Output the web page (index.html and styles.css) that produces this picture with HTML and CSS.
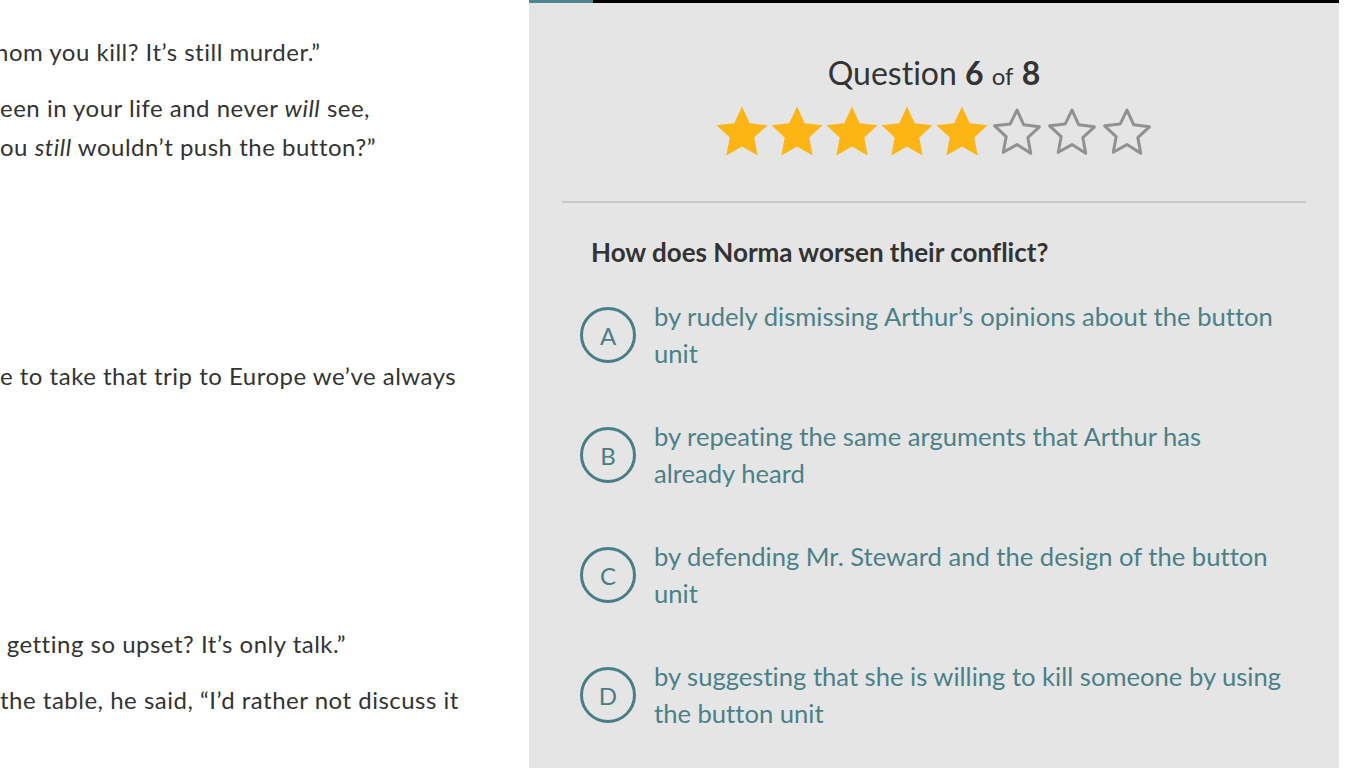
FILE: index.html
```html
<!DOCTYPE html>
<html lang="en">
<head>
<meta charset="utf-8">
<title>Question 6 of 8</title>
<link rel="stylesheet" href="styles.css">
</head>
<body>
<div class="page">
  <section class="reading">
    <div class="text">
      <p><span class="line cut-h">hom you kill? It’s still murder.”</span></p>
      <p>
        <span class="line">een in your life and never <em>will</em> see,</span>
        <span class="line">ou <em>still</em> wouldn’t push the button?”</span>
      </p>
      <p>
        <span class="line">&nbsp;</span>
        <span class="line">&nbsp;</span>
      </p>
      <p>
        <span class="line">&nbsp;</span>
        <span class="line">&nbsp;</span>
        <span class="line">e to take that trip to Europe we’ve always</span>
      </p>
      <p>
        <span class="line">&nbsp;</span>
        <span class="line">&nbsp;</span>
        <span class="line">&nbsp;</span>
      </p>
      <p>
        <span class="line">&nbsp;</span>
        <span class="line">&nbsp;</span>
        <span class="line">&nbsp;getting so upset? It’s only talk.”</span>
      </p>
      <p>
        <span class="line">the table, he said, “I’d rather not discuss it</span>
      </p>
    </div>
  </section>
  <section class="quiz">
    <div class="progress"><div class="progress-fill"></div></div>
    <div class="quiz-body">
      <h2 class="counter">Question <b>6</b> <small>of</small> <b>8</b></h2>
      <div class="stars">
        <svg class="star full" viewBox="1.2 1.4 21.6 20.7"><path d="M12 1.6l3.2 6.9 7.4.9-5.5 5.1 1.4 7.4L12 18.2l-6.5 3.7 1.4-7.4-5.5-5.1 7.4-.9z"/></svg>
        <svg class="star full" viewBox="1.2 1.4 21.6 20.7"><path d="M12 1.6l3.2 6.9 7.4.9-5.5 5.1 1.4 7.4L12 18.2l-6.5 3.7 1.4-7.4-5.5-5.1 7.4-.9z"/></svg>
        <svg class="star full" viewBox="1.2 1.4 21.6 20.7"><path d="M12 1.6l3.2 6.9 7.4.9-5.5 5.1 1.4 7.4L12 18.2l-6.5 3.7 1.4-7.4-5.5-5.1 7.4-.9z"/></svg>
        <svg class="star full" viewBox="1.2 1.4 21.6 20.7"><path d="M12 1.6l3.2 6.9 7.4.9-5.5 5.1 1.4 7.4L12 18.2l-6.5 3.7 1.4-7.4-5.5-5.1 7.4-.9z"/></svg>
        <svg class="star full" viewBox="1.2 1.4 21.6 20.7"><path d="M12 1.6l3.2 6.9 7.4.9-5.5 5.1 1.4 7.4L12 18.2l-6.5 3.7 1.4-7.4-5.5-5.1 7.4-.9z"/></svg>
        <svg class="star empty" viewBox="1.2 1.4 21.6 20.7"><path d="M12 3.1l2.8 6.1 6.5.8-4.8 4.5 1.2 6.5L12 17.4l-5.7 3.2 1.2-6.5-4.8-4.5 6.5-.8z"/></svg>
        <svg class="star empty" viewBox="1.2 1.4 21.6 20.7"><path d="M12 3.1l2.8 6.1 6.5.8-4.8 4.5 1.2 6.5L12 17.4l-5.7 3.2 1.2-6.5-4.8-4.5 6.5-.8z"/></svg>
        <svg class="star empty" viewBox="1.2 1.4 21.6 20.7"><path d="M12 3.1l2.8 6.1 6.5.8-4.8 4.5 1.2 6.5L12 17.4l-5.7 3.2 1.2-6.5-4.8-4.5 6.5-.8z"/></svg>
      </div>
      <hr class="divider">
      <h3 class="question">How does Norma worsen their conflict?</h3>
      <ul class="options">
        <li class="option"><span class="letter">A</span><span class="answer">by rudely dismissing Arthur’s opinions about the button unit</span></li>
        <li class="option"><span class="letter">B</span><span class="answer">by repeating the same arguments that Arthur has already heard</span></li>
        <li class="option"><span class="letter">C</span><span class="answer">by defending Mr. Steward and the design of the button unit</span></li>
        <li class="option"><span class="letter">D</span><span class="answer">by suggesting that she is willing to kill someone by using the button unit</span></li>
      </ul>
    </div>
  </section>
  <div class="gutter"></div>
</div>
</body>
</html>
```

FILE: styles.css
```css
* { box-sizing: border-box; }
html, body {
  margin: 0;
  padding: 0;
  height: 100%;
  background: #ffffff;
  font-family: Lato, "Open Sans", sans-serif;
  font-variant-ligatures: none;
  overflow: hidden;
}
.page {
  display: flex;
  height: 768px;
}
.reading {
  width: 529px;
  flex: none;
  overflow: hidden;
  background: #ffffff;
}
.text {
  padding-top: 32px;
  color: #333333;
  font-size: 24px;
  letter-spacing: 0.5px;
  line-height: 39px;
}
.text p {
  margin: 0 0 17px;
}
.line {
  display: block;
  white-space: nowrap;
}
.cut-h { margin-left: -5px; }
.text em { font-style: italic; }

.quiz {
  width: 810px;
  flex: none;
  background: #e5e5e5;
  display: flex;
  flex-direction: column;
}
.gutter { flex: 1; background: #ffffff; }
.progress {
  height: 3px;
  background: #000000;
}
.progress-fill {
  width: 64px;
  height: 3px;
  background: #4e8591;
}
.quiz-body {
  padding: 50px 33px 0;
}
.counter {
  margin: 0;
  height: 40px;
  text-align: center;
  font-weight: 400;
  font-size: 32px;
  line-height: 40px;
  color: #333333;
}
.counter b { font-weight: 700; }
.counter small { font-size: 24px; line-height: 1; }
.stars {
  display: flex;
  justify-content: center;
  gap: 3px;
  margin-top: 13px;
  height: 50px;
}
.star {
  width: 52px;
  height: 50px;
  overflow: visible;
}
.star.full path { fill: #fdb515; }
.star.empty path {
  fill: none;
  stroke: #919191;
  stroke-width: 1.25;
  stroke-linejoin: round;
}
.divider {
  margin: 45px 0 0;
  border: 0;
  height: 2px;
  background: #c9c9c9;
}
.question {
  margin: 33px 0 0 29px;
  font-size: 26px;
  font-weight: 700;
  line-height: 32px;
  color: #333333;
}
.options {
  list-style: none;
  margin: 30px 0 0 18px;
  padding: 0;
}
.option {
  display: flex;
  align-items: center;
  gap: 18px;
  margin-bottom: 46px;
}
.letter {
  flex: none;
  width: 56px;
  height: 56px;
  border: 3px solid #4a7e87;
  border-radius: 50%;
  display: flex;
  align-items: center;
  justify-content: center;
  color: #4a7e87;
  font-size: 24px;
  font-weight: 400;
}
.answer {
  font-size: 25.6px;
  line-height: 37px;
  color: #4a8189;
  padding-right: 22px;
}
```
